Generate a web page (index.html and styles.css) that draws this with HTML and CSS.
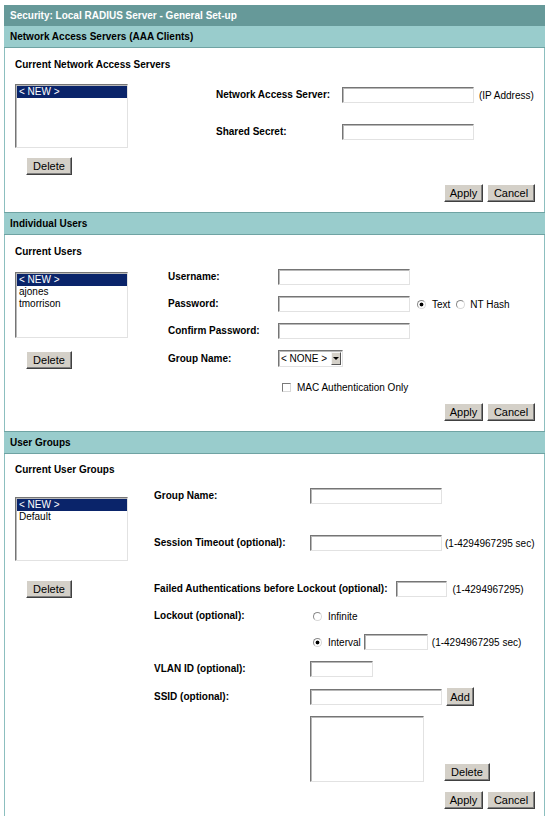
FILE: index.html
```html
<!DOCTYPE html>
<html lang="en">
<head>
<meta charset="utf-8">
<title>Local RADIUS Server - General Set-up</title>
<link rel="stylesheet" href="styles.css">
</head>
<body>
<div class="panel">
  <div class="title">Security: Local RADIUS Server - General Set-up</div>

  <!-- AAA clients -->
  <section class="sec sec-nas">
    <div class="sec-head">Network Access Servers (AAA Clients)</div>
    <div class="sec-body">
      <div class="sub">Current Network Access Servers</div>
      <div class="cols">
        <div class="side">
          <div class="listbox"><div class="opt sel">&lt; NEW &gt;</div></div>
          <button class="btn btn-del">Delete</button>
        </div>
        <div class="fields">
          <div class="row"><label class="lbl">Network Access Server:</label><input class="txt w132" type="text"><span class="hint hint-ip">(IP Address)</span></div>
          <div class="row"><label class="lbl">Shared Secret:</label><input class="txt w132" type="text"></div>
        </div>
      </div>
      <div class="actions"><button class="btn btn-apply">Apply</button><button class="btn btn-cancel">Cancel</button></div>
    </div>
  </section>

  <!-- Users -->
  <section class="sec sec-users">
    <div class="sec-head">Individual Users</div>
    <div class="sec-body">
      <div class="sub">Current Users</div>
      <div class="cols">
        <div class="side">
          <div class="listbox">
            <div class="opt sel">&lt; NEW &gt;</div>
            <div class="opt">ajones</div>
            <div class="opt">tmorrison</div>
          </div>
          <button class="btn btn-del">Delete</button>
        </div>
        <div class="fields">
          <div class="row"><label class="lbl">Username:</label><input class="txt w132" type="text"></div>
          <div class="row">
            <label class="lbl">Password:</label><input class="txt w132" type="password">
            <input class="radio radio-text" type="radio" name="pwtype" checked><span class="opt-lbl">Text</span>
            <input class="radio radio-nt" type="radio" name="pwtype"><span class="opt-lbl opt-nt">NT Hash</span>
          </div>
          <div class="row"><label class="lbl">Confirm Password:</label><input class="txt w132" type="password"></div>
          <div class="row row-select">
            <label class="lbl">Group Name:</label>
            <div class="select"><span class="select-val">&lt; NONE &gt;</span><span class="select-arrow"></span></div>
          </div>
          <div class="row row-check"><input class="check" type="checkbox"><span class="check-lbl">MAC Authentication Only</span></div>
        </div>
      </div>
      <div class="actions"><button class="btn btn-apply">Apply</button><button class="btn btn-cancel">Cancel</button></div>
    </div>
  </section>

  <!-- Groups -->
  <section class="sec sec-groups">
    <div class="sec-head">User Groups</div>
    <div class="sec-body">
      <div class="sub">Current User Groups</div>
      <div class="cols">
        <div class="side">
          <div class="listbox">
            <div class="opt sel">&lt; NEW &gt;</div>
            <div class="opt">Default</div>
          </div>
          <button class="btn btn-del">Delete</button>
        </div>
        <div class="fields">
          <div class="row"><label class="lbl">Group Name:</label><input class="txt w132" type="text"></div>
          <div class="row row-session"><label class="lbl">Session Timeout (optional):</label><input class="txt w132" type="text"><span class="hint hint-tight">(1-4294967295 sec)</span></div>
          <div class="row row-failed"><label class="lbl lbl-auto">Failed Authentications before Lockout (optional):</label><input class="txt w51 failed-input" type="text"><span class="hint hint-wide">(1-4294967295)</span></div>
          <div class="row row-lock"><label class="lbl">Lockout (optional):</label><input class="radio radio-lock" type="radio" name="lockout"><span class="opt-lbl">Infinite</span></div>
          <div class="row row-interval indent"><input class="radio radio-lock" type="radio" name="lockout" checked><span class="opt-lbl">Interval</span><input class="txt w64 interval-input" type="text"><span class="hint">(1-4294967295 sec)</span></div>
          <div class="row row-vlan"><label class="lbl">VLAN ID (optional):</label><input class="txt w63" type="text"></div>
          <div class="row row-ssid"><label class="lbl">SSID (optional):</label><input class="txt w132" type="text"><button class="btn btn-add">Add</button></div>
          <div class="row row-ssidlist indent">
            <div class="listbox ssid-list"></div>
            <button class="btn btn-del btn-ssid-del">Delete</button>
          </div>
        </div>
      </div>
      <div class="actions"><button class="btn btn-apply">Apply</button><button class="btn btn-cancel">Cancel</button></div>
    </div>
  </section>
</div>
</body>
</html>
```

FILE: styles.css
```css
* { box-sizing: border-box; }

html, body {
  margin: 0;
  background: #fff;
  font-family: "Liberation Sans", Arial, sans-serif;
  font-size: 10px;
  color: #000;
}

.panel {
  margin: 5px 0 0 4px;
  width: 541px;
}

.title {
  height: 21px;
  line-height: 21px;
  padding-left: 6px;
  background: #669999;
  color: #fff;
  font-weight: bold;
}

.sec-head {
  height: 23px;
  line-height: 21px;
  padding-left: 6px;
  background: #99cccc;
  border-top: 1px solid #6fa3a3;
  border-bottom: 1px solid #6fa3a3;
  font-weight: bold;
}
.sec-nas .sec-head {
  height: 22px;
  border-top: none;
}

.sec-body {
  border-left: 1px solid #8cbfbf;
  border-right: 1px solid #8cbfbf;
  padding: 0 9px 10px 10px;
  overflow: hidden;
}

.sub {
  font-weight: bold;
  line-height: 12px;
}

.cols {
  display: flex;
  align-items: flex-start;
}

.side {
  flex: none;
  display: flex;
  flex-direction: column;
  align-items: flex-start;
}

.fields {
  display: flex;
  flex-direction: column;
}

.row {
  display: flex;
  align-items: center;
  height: 16px;
}

.lbl {
  flex: none;
  font-weight: bold;
  line-height: 12px;
}
.lbl-auto { width: auto !important; }

/* sunken text field */
.txt {
  height: 16px;
  margin: 0;
  padding: 0 2px;
  font: 10px "Liberation Sans", Arial, sans-serif;
  background: #fff;
  border: 1px solid;
  border-color: #757575 #e2e2e2 #e2e2e2 #757575;
  box-shadow: inset 1px 1px 0 #b8b8b8;
  outline: none;
}
.w132 { width: 132px; }
.w51 { width: 51px; }
.w63 { width: 63px; }
.w64 { width: 64px; }

.hint { margin-left: 4px; white-space: nowrap; }
.hint-ip { margin-left: 5px; }
.hint-tight { margin-left: 3px; }
.hint-wide { margin-left: 6px; }

/* raised push button */
.btn {
  flex: none;
  height: 18px;
  margin: 0;
  padding: 0;
  font: 11px "Liberation Sans", Arial, sans-serif;
  color: #000;
  background: #d4d0c8;
  border: 1px solid;
  border-color: #fff #404040 #404040 #fff;
  box-shadow: inset -1px -1px 0 #808080;
}
.btn-del { width: 46px; margin-left: 11px; }
.btn-apply { width: 39px; }
.btn-cancel { width: 48px; }
.btn-add { width: 28px; height: 19px; margin-left: 4px; }

.actions {
  display: flex;
  justify-content: flex-end;
  gap: 4px;
}

/* list boxes */
.listbox {
  width: 113px;
  background: #fff;
  border: 1px solid;
  border-color: #757575 #e2e2e2 #e2e2e2 #757575;
  box-shadow: inset 1px 1px 0 #b8b8b8;
  padding: 1px 0 0 1px;
}
.opt {
  height: 12px;
  line-height: 12px;
  padding-left: 2px;
  white-space: nowrap;
}
.opt.sel {
  background: #0a246a;
  color: #fff;
}

/* radio buttons and check box */
.radio {
  appearance: none;
  -webkit-appearance: none;
  flex: none;
  width: 9px;
  height: 9px;
  margin: 0;
  border-radius: 50%;
  border: 1px solid;
  border-color: #8a8a8a #d8d8d8 #d8d8d8 #8a8a8a;
  background: #fff;
}
.radio:checked {
  background: radial-gradient(circle, #000 0 1.5px, #fff 2.3px);
}
.opt-lbl { margin-left: 6px; white-space: nowrap; }
.radio-text { margin-left: 7px; }
.radio-nt { margin-left: 6px; }
.opt-nt { margin-left: 5px; }

.check {
  appearance: none;
  -webkit-appearance: none;
  flex: none;
  width: 9px;
  height: 9px;
  margin: 0;
  border: 1px solid;
  border-color: #7a7a7a #d8d8d8 #d8d8d8 #7a7a7a;
  background: #fff;
}
.check-lbl { margin-left: 6px; }

/* drop-down */
.select {
  display: flex;
  align-items: center;
  width: 65px;
  height: 17px;
  padding: 1px;
  background: #fff;
  border: 1px solid;
  border-color: #757575 #e2e2e2 #e2e2e2 #757575;
  box-shadow: inset 1px 1px 0 #b8b8b8;
}
.select-val {
  flex: 1;
  padding-left: 1px;
  white-space: nowrap;
}
.select-arrow {
  position: relative;
  width: 10px;
  height: 13px;
  background: #d4d0c8;
  border: 1px solid;
  border-color: #f4f4f4 #555 #555 #f4f4f4;
}
.select-arrow::after {
  content: "";
  position: absolute;
  left: 1px;
  top: 4px;
  border-left: 3px solid transparent;
  border-right: 3px solid transparent;
  border-top: 3px solid #000;
}

/* Network access servers */
.sec-nas .sub { margin-top: 11px; }
.sec-nas .cols { margin-top: 13px; }
.sec-nas .side { width: 201px; }
.sec-nas .listbox { height: 64px; }
.sec-nas .btn-del { margin-top: 9px; }
.sec-nas .fields { margin-top: 3px; gap: 21px; }
.sec-nas .lbl { width: 126px; }
.sec-nas .actions { margin-top: 9px; }

/* Individual users */
.sec-users .sub { margin-top: 11px; }
.sec-users .cols { margin-top: 11px; }
.sec-users .side { width: 153px; }
.sec-users .listbox { height: 66px; margin-top: 3px; }
.sec-users .btn-del { margin-top: 13px; }
.sec-users .fields { gap: 11px; }
.sec-users .lbl { width: 110px; }
.sec-users .row-select { height: 17px; }
.sec-users .row-check { height: 12px; margin-top: 3px; padding-left: 114px; }
.sec-users .actions { margin-top: 10px; }

/* User groups */
.sec-groups .sub { margin-top: 10px; }
.sec-groups .cols { margin-top: 12px; }
.sec-groups .side { width: 139px; }
.sec-groups .side .listbox { height: 64px; margin-top: 9px; }
.sec-groups .side .btn-del { margin-top: 19px; }
.sec-groups .lbl { width: 156px; }
.sec-groups .indent { padding-left: 156px; }
.sec-groups .row-session { margin-top: 31px; }
.sec-groups .row-failed { margin-top: 30px; }
.sec-groups .failed-input { margin-left: 8px; }
.sec-groups .row-lock { margin-top: 11px; }
.sec-groups .radio-lock { margin-left: 3px; }
.sec-groups .row-interval { margin-top: 10px; }
.sec-groups .interval-input { margin-left: 3px; }
.sec-groups .row-vlan { margin-top: 11px; }
.sec-groups .row-ssid { margin-top: 10px; height: 19px; }
.sec-groups .row-ssidlist { margin-top: 10px; height: 66px; align-items: flex-end; }
.sec-groups .ssid-list { width: 114px; height: 66px; }
.sec-groups .btn-ssid-del { margin: 0 0 1px 20px; }
.sec-groups .actions { margin-top: 9px; }
```
